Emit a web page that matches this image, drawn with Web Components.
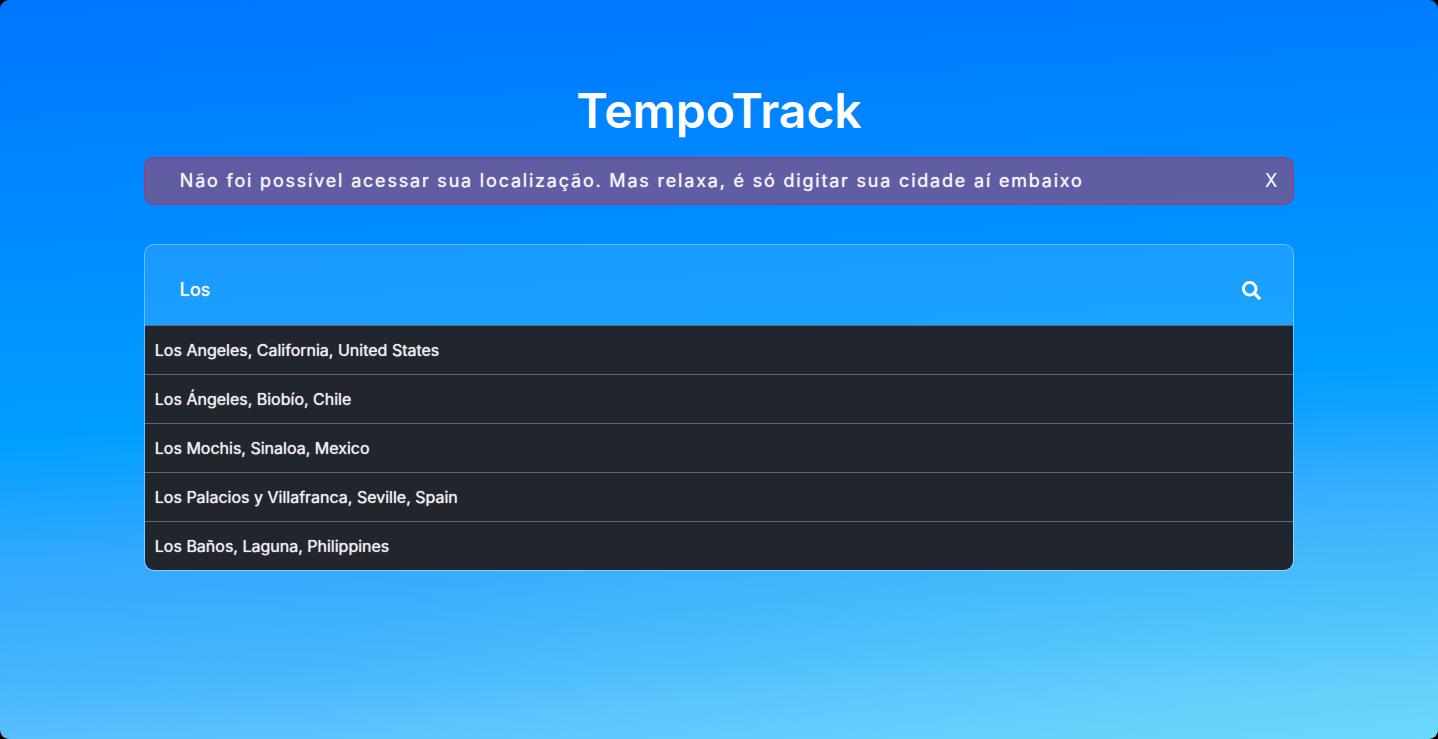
<!DOCTYPE html>
<html lang="pt-BR">
<head>
<meta charset="utf-8">
<meta name="viewport" content="width=device-width, initial-scale=1">
<title>TempoTrack</title>
<style>
html { background: #000; }
body { margin: 0; font-family: Inter, "Liberation Sans", sans-serif; color: #fff; }
</style>
</head>
<body>
<tempo-app>
  <tempo-alert>Não foi possível acessar sua localização. Mas relaxa, é só digitar sua cidade aí embaixo</tempo-alert>
  <city-search value="Los">
    <city-option>Los Angeles, California, United States</city-option>
    <city-option>Los Ángeles, Biobío, Chile</city-option>
    <city-option>Los Mochis, Sinaloa, Mexico</city-option>
    <city-option>Los Palacios y Villafranca, Seville, Spain</city-option>
    <city-option>Los Baños, Laguna, Philippines</city-option>
  </city-search>
</tempo-app>

<template id="app">
  <style>
    :host {
      display: block; box-sizing: border-box; min-height: 100vh; padding: 80px 10%;
      border-radius: 9px;
      background:
        radial-gradient(ellipse 80% 45% at 100% 100%, rgba(110,240,245,.35), rgba(110,240,245,0)),
        linear-gradient(177deg, #0076ff 0%, #0083ff 18%, #008dff 31%, #0096ff 43%, #009fff 54%, #18a3ff 61%, #31a9ff 69%, #40b1fc 79%, #4ab9fd 86%, #5ac0fe 91%, #66ceff 100%);
    }
    h1 { margin: 0 0 16px; font-size: 48px; line-height: 61px; font-weight: 600; text-align: center; }
    main { display: flex; flex-direction: column; gap: 39px; }
  </style>
  <h1>TempoTrack</h1>
  <main><slot></slot></main>
</template>

<template id="alert">
  <style>
    :host {
      display: flex; align-items: center; justify-content: space-between; box-sizing: border-box;
      min-height: 48px; padding: 0 12px 0 35px;
      border: 1px solid rgba(220,20,60,.5); border-radius: 10px;
      background: rgba(160,63,100,.6); color: #f3f1fa;
    }
    p { margin: 0; font-size: 18px; line-height: 24px; font-weight: 400; letter-spacing: .1em; text-shadow: 0 0 1px currentColor; }
    button { border: 0; padding: 0 4px; background: none; color: #fff; font: 400 18px/24px Inter, sans-serif; cursor: pointer; }
  </style>
  <p role="alert"><slot></slot></p>
  <button type="button" aria-label="Fechar">X</button>
</template>

<template id="search">
  <style>
    :host { display: block; border: 1px solid rgba(255,255,255,.35); border-radius: 10px; overflow: hidden; background: rgba(255,255,255,.1); }
    form { display: flex; align-items: center; height: 80px; padding: 10px 32px 0 35px; box-sizing: border-box; }
    input { flex: 1; min-width: 0; border: 0; padding: 0; outline: 0; background: none; color: #fff; font: 400 18px/24px Inter, sans-serif; text-shadow: 0 0 1px currentColor; }
    button { display: flex; border: 0; padding: 0; background: none; color: #fff; cursor: pointer; }
    svg { display: block; width: 19px; height: 19px; }
  </style>
  <form>
    <input type="text" aria-label="Cidade" autocomplete="off">
    <button type="button" aria-label="Buscar">
      <svg viewBox="0 0 512 512" fill="currentColor" aria-hidden="true"><path d="M505 442.700 405.300 343c-4.500-4.500-10.600-7-17-7H372c27.600-35.300 44-79.700 44-128C416 93.100 322.900 0 208 0S0 93.100 0 208s93.100 208 208 208c48.300 0 92.700-16.400 128-44v16.300c0 6.400 2.500 12.500 7 17l99.700 99.700c9.400 9.400 24.600 9.400 33.900 0l28.300-28.300c9.400-9.400 9.400-24.600.1-34zM208 336c-70.700 0-128-57.200-128-128 0-70.700 57.200-128 128-128 70.700 0 128 57.200 128 128 0 70.700-57.200 128-128 128z"/></svg>
    </button>
  </form>
  <div role="listbox" aria-label="Cidades"><slot></slot></div>
</template>

<template id="option">
  <style>
    :host { display: block; background: #21252d; border-top: 1px solid #62666e; }
    button { display: block; width: 100%; padding: 12px 10px; border: 0; background: none; color: #eee; text-align: left; font: 400 16px/24px Inter, sans-serif; text-shadow: 0 0 1px currentColor; cursor: pointer; }
  </style>
  <button type="button" role="option"><slot></slot></button>
</template>

<script>
class TemplateElement extends HTMLElement {
  constructor() {
    super();
    this.attachShadow({ mode: "open" }).append(
      document.getElementById(this.constructor.template).content.cloneNode(true));
  }
}
customElements.define("tempo-app", class extends TemplateElement { static template = "app"; });
customElements.define("tempo-alert", class extends TemplateElement {
  static template = "alert";
  connectedCallback() {
    this.shadowRoot.querySelector("button").onclick = () => this.remove();
  }
});
customElements.define("city-search", class extends TemplateElement {
  static template = "search";
  connectedCallback() {
    this.shadowRoot.querySelector("input").value = this.getAttribute("value") || "";
  }
});
customElements.define("city-option", class extends TemplateElement { static template = "option"; });
</script>
</body>
</html>
